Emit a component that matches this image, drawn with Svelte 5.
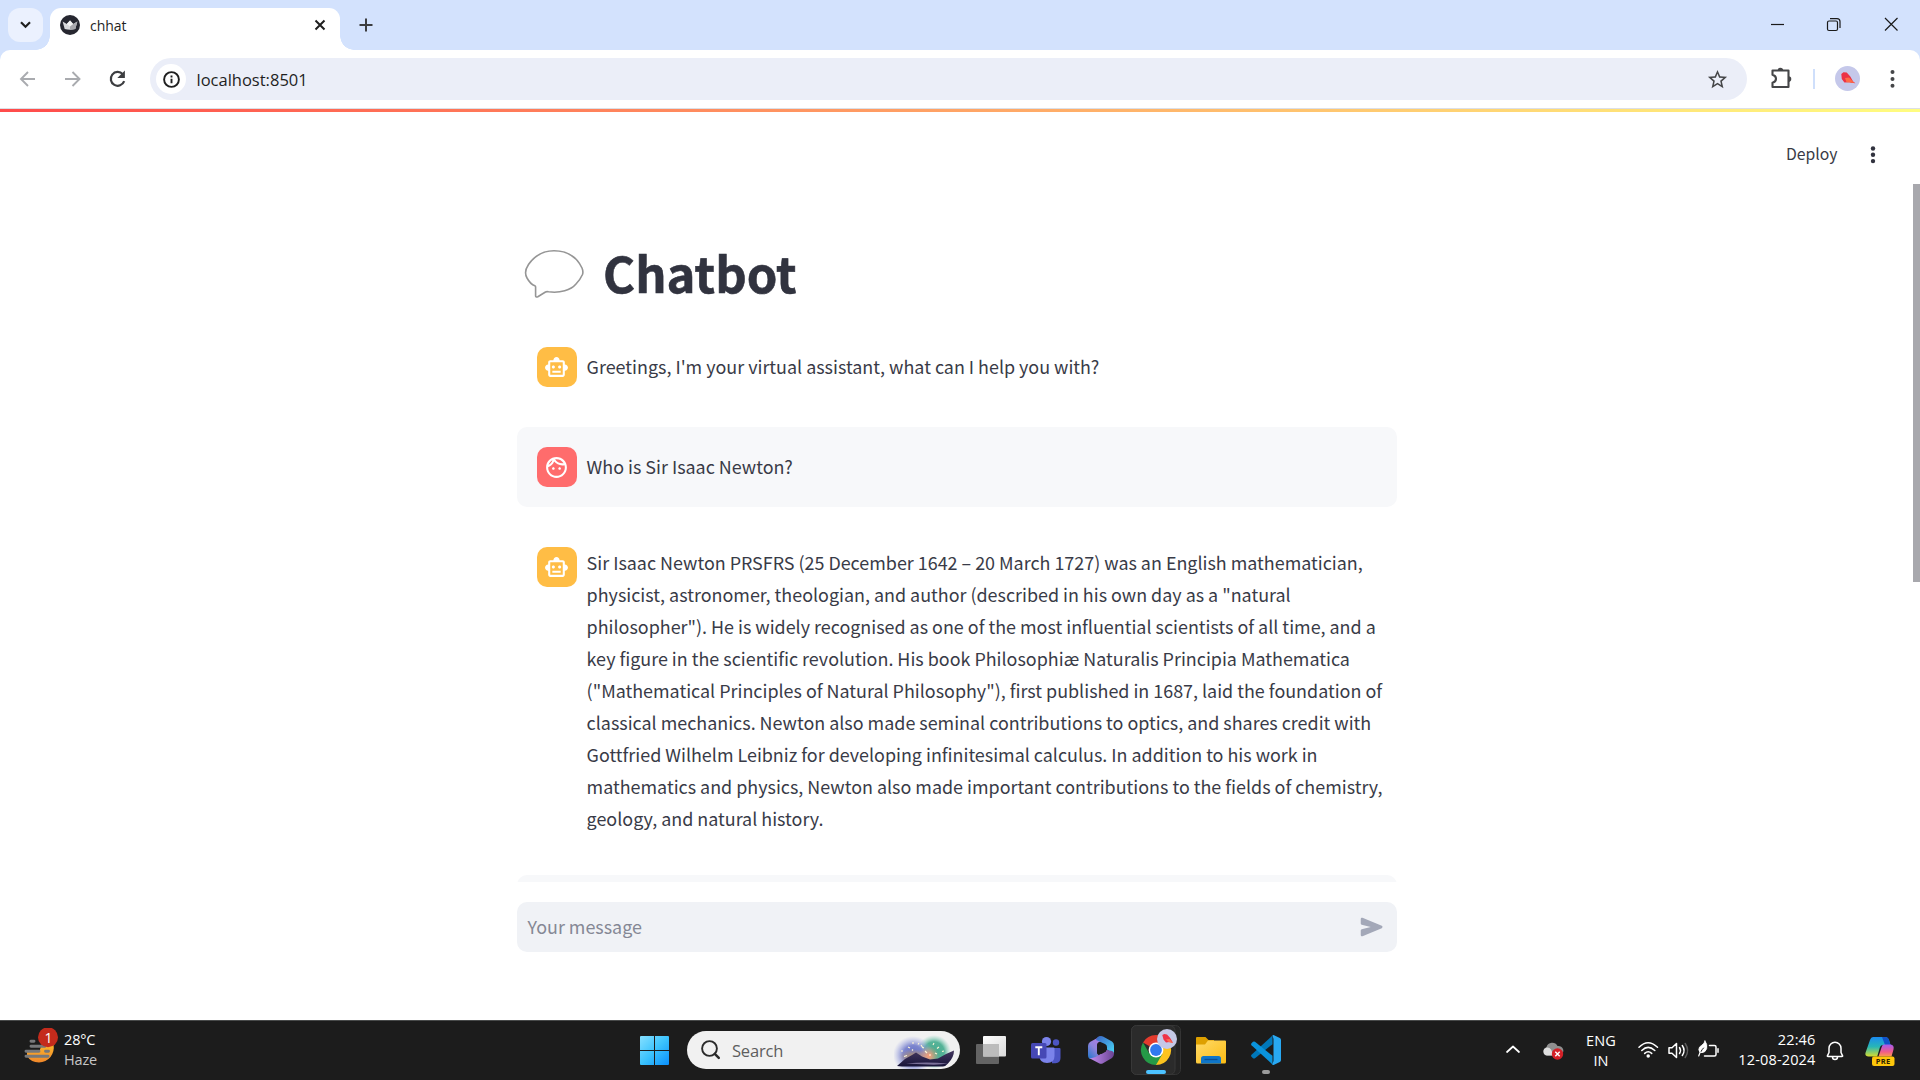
<script>
  const robot =
    'M20 9V7c0-1.1-.9-2-2-2h-3c0-1.66-1.34-3-3-3S9 3.34 9 5H6c-1.1 0-2 .9-2 2v2c-1.66 0-3 1.34-3 3s1.34 3 3 3v4c0 1.1.9 2 2 2h12c1.1 0 2-.9 2-2v-4c1.66 0 3-1.34 3-3s-1.34-3-3-3zm-2 10H6V7h12v12zm-9-6c-.83 0-1.5-.67-1.5-1.5S8.17 10 9 10s1.5.67 1.5 1.5S9.83 13 9 13zm7.5-1.5c0 .83-.67 1.5-1.5 1.5s-1.5-.67-1.5-1.5.67-1.5 1.5-1.5 1.5.67 1.5 1.5zM8 15h8v2H8v-2z';
  const face =
    'M10.25 13c0 .69-.56 1.25-1.25 1.25S7.75 13.69 7.75 13s.56-1.25 1.25-1.25 1.25.56 1.25 1.25zM15 11.75c-.69 0-1.25.56-1.25 1.25s.56 1.25 1.25 1.25 1.25-.56 1.25-1.25-.56-1.25-1.25-1.25zm7 .25c0 5.52-4.48 10-10 10S2 17.52 2 12 6.48 2 12 2s10 4.48 10 10zM10.66 4.12C12.06 6.44 14.6 8 17.5 8c.46 0 .91-.05 1.34-.12C17.44 5.56 14.9 4 12 4c-.46 0-.91.05-1.34.12zM4.42 9.47c1.71-.97 3.03-2.55 3.66-4.44C6.37 6 5.05 7.58 4.42 9.47zM20 12c0-.78-.12-1.53-.33-2.24-.7.15-1.42.24-2.17.24-3.13 0-5.92-1.44-7.76-3.69C8.69 8.87 6.6 10.88 4 11.86c.01.04 0 .09 0 .14 0 4.41 3.59 8 8 8s8-3.59 8-8z';

  const messages = [
    { role: 'assistant', lines: ["Greetings, I'm your virtual assistant, what can I help you with?"] },
    { role: 'user', lines: ['Who is Sir Isaac Newton?'] },
    {
      role: 'assistant',
      lines: [
        'Sir Isaac Newton PRSFRS (25 December 1642 – 20 March 1727) was an English mathematician,',
        'physicist, astronomer, theologian, and author (described in his own day as a "natural',
        'philosopher"). He is widely recognised as one of the most influential scientists of all time, and a',
        'key figure in the scientific revolution. His book Philosophiæ Naturalis Principia Mathematica',
        '("Mathematical Principles of Natural Philosophy"), first published in 1687, laid the foundation of',
        'classical mechanics. Newton also made seminal contributions to optics, and shares credit with',
        'Gottfried Wilhelm Leibniz for developing infinitesimal calculus. In addition to his work in',
        'mathematics and physics, Newton also made important contributions to the fields of chemistry,',
        'geology, and natural history.'
      ]
    }
  ];
</script>

<div class="screen">
  <header class="tabs">
    <button class="tab-search" aria-label="Search tabs">
      <svg width="35" height="34" fill="none" stroke="#1f1f1f" stroke-width="2.2"><path d="M13 14.2l4.5 4.5 4.5-4.5" /></svg>
    </button>
    <div class="tab">
      <svg class="favicon" width="20" height="20" viewBox="0 0 20 20">
        <circle cx="10" cy="10" r="10" fill="#262730" />
        <path d="M2.6 6.5l4.2 2.4L10 5.6l3.2 3.3 4.2-2.4-2.1 7.6q-5.3 1.1-10.6 0z" fill="#d9d9dc" />
        <path d="M10 5.6l3.2 3.3 4.2-2.4-2.1 7.6q-2.6.5-5.3.6z" fill="#a9a9ae" />
        <path d="M6.8 8.9L10 5.6l3.2 3.3L10 11.5z" fill="#f4f4f4" />
      </svg>
      <span class="tab-title">chhat</span>
      <svg class="tab-close" width="12" height="12" fill="none" stroke="#1f1f1f" stroke-width="2"><path d="M1.5 1.5l9 9M10.5 1.5l-9 9" /></svg>
    </div>
    <svg class="new-tab" width="14" height="14" stroke="#3c3d40" stroke-width="2"><path d="M7 .5v13M.5 7h13" /></svg>
    <svg class="window-controls" width="150" height="50" fill="none" stroke="#1a1a1a" stroke-width="1.2">
      <path d="M1 24.5h13" />
      <rect x="57.5" y="21" width="10" height="9.5" rx="1.5" />
      <path d="M60 18.6h7a3 3 0 0 1 3 3v6.5" />
      <path d="M115 18l12.5 12.5M127.5 18L115 30.5" />
    </svg>
  </header>

  <div class="toolbar">
    <svg class="nav-icons" width="126" height="58" fill="none" stroke-width="1.9">
      <g stroke="#a9abaf"><path d="M35 29H21.5M28 22l-7 7 7 7" /><path d="M65 29h14M72.5 22l7 7-7 7" /></g>
      <path d="M122.8 24.2a6.9 6.9 0 1 0 1.4 7" stroke="#3c3d40" stroke-width="2.2" />
      <path d="M124.9 20.5v7.6h-7.6z" fill="#3c3d40" />
    </svg>
    <div class="omnibox">
      <div class="site-info">
        <svg width="17" height="17" fill="none" stroke="#1f1f1f" stroke-width="1.9"><circle cx="8.5" cy="8.5" r="7.4" /><path d="M8.5 7.7v4.6M8.5 4.6v1.9" /></svg>
      </div>
      <span class="url">localhost:8501</span>
      <svg class="star" width="23" height="23" viewBox="0 0 24 24" fill="#454648"><path d="M22 9.24l-7.19-.62L12 2 9.19 8.63 2 9.24l5.46 4.73L5.82 21 12 17.27 18.18 21l-1.63-7.03L22 9.24zM12 15.4l-3.76 2.27 1-4.28-3.32-2.88 4.38-.38L12 6.1l1.71 4.04 4.38.38-3.32 2.88 1 4.28L12 15.4z" /></svg>
    </div>
    <svg class="actions" width="150" height="58">
      <path d="M2.5 20.5h16v16.5h-16v-4.2q3.5-1 3.5-4t-3.5-4z" fill="none" stroke="#454648" stroke-width="2.1" stroke-linejoin="round" />
      <path d="M7.6 20.5a2.8 2.8 0 0 1 5.6 0zM18.5 26.3a2.8 2.8 0 0 1 0 5.6z" fill="#454648" />
      <path d="M44 19v20" stroke="#cfdffb" stroke-width="2" />
      <circle cx="77.5" cy="28.5" r="12.5" fill="#c5c8ea" />
      <path d="M71.3 24l2.2-1.8 3.2.3 3.6 4 2.8 5 2.3 1.8-4-.5-2-.5-5 .2-2.6-3.5z" fill="#ec3146" />
      <path d="M75 28l4-.5 5.5 5.5-4-.5-4-.3z" fill="#ff6a45" />
      <g fill="#454648"><circle cx="122.5" cy="22" r="2" /><circle cx="122.5" cy="29" r="2" /><circle cx="122.5" cy="35.8" r="2" /></g>
    </svg>
  </div>

  <div class="decoration"></div>

  <div class="app">
    <div class="app-bar">
      <span class="deploy">Deploy</span>
      <svg width="6" height="18" fill="#31333f"><circle cx="3" cy="2.5" r="2.2" /><circle cx="3" cy="8.8" r="2.2" /><circle cx="3" cy="15.1" r="2.2" /></svg>
    </div>
    <div class="scroll-thumb"></div>
    <main>
      <h1>
        <svg width="60" height="50" viewBox="-1 -1.5 60 50" fill="none" stroke="#959595" stroke-width="1.6" stroke-linejoin="round">
          <path d="M29 .3C17 .3 9 6 3.5 14Q-1.500 21.500 2 27.500C4.500 32 7.500 34.500 9.800 35.300Q10.800 35.700 10.600 37V45.500Q11 47 12.800 46.200L20.500 41.500Q21.700 40.800 23.500 41.300C35 43 46 39.500 51 33.500Q55 29.500 57.500 24Q58.500 21 57 17.500C52 7 43 .3 29 .3z" />
        </svg>
        <span>Chatbot</span>
      </h1>
      {#each messages as message}
        <section class="message {message.role}" class:long={message.lines.length > 1}>
          <div class="avatar">
            <svg width="25" height="25" viewBox="0 0 24 24" fill="#fff"><path d={message.role === 'user' ? face : robot} /></svg>
          </div>
          <p>
            {#each message.lines as line}<span>{line}</span>{/each}
          </p>
        </section>
      {/each}
      <div class="next-message"></div>
      <div class="chat-input">
        <span>Your message</span>
        <svg width="30" height="30" viewBox="0 0 24 24" fill="#a3a8b8"><path d="M3 5.51v3.71c0 .46.31.86.76.97L11 12l-7.24 1.81c-.45.11-.76.51-.76.97v3.71c0 .72.73 1.2 1.39.92l15.42-6.49c.82-.34.82-1.5 0-1.84L4.39 4.58C3.73 4.31 3 4.79 3 5.51z" /></svg>
      </div>
    </main>
  </div>

  <footer class="taskbar">
    <div class="weather">
      <svg width="36" height="40">
        <defs><linearGradient id="sun" x2="0" y2="1"><stop offset="0" stop-color="#fbb52c" /><stop offset="1" stop-color="#f0872a" /></linearGradient></defs>
        <path d="M3 24h12l2.500-6.500q1-1 3-1h9A15 15 0 0 1 15 34.500Q7 34.500 3 28z" fill="url(#sun)" />
        <g stroke="#77787a" stroke-width="2.9" stroke-linecap="round"><path d="M7 13.200h3M7 18.200h14M2 23.300h13M21.500 23.300h3M2 28.300h22" /></g>
        <circle cx="24" cy="9.3" r="10" fill="#c42b1c" />
        <text x="24.6" y="14.6" text-anchor="middle" class="badge-text">1</text>
      </svg>
      <div class="weather-text"><span>28°C</span><span class="dim">Haze</span></div>
    </div>

    <div class="pinned">
      <svg class="start" width="29" height="29">
        <defs><linearGradient id="win" x2="1" y2="1"><stop offset="0" stop-color="#86e0ff" /><stop offset=".5" stop-color="#3cc3fd" /><stop offset="1" stop-color="#0a8ffb" /></linearGradient></defs>
        <path d="M1 0h13v14H0V1q0-1 1-1zM15 0h13q1 0 1 1v13H15zM0 15h14v14H1q-1 0-1-1zM15 15h14v13q0 1-1 1H15z" fill="url(#win)" />
      </svg>
      <div class="search">
        <svg class="lens" width="20" height="20" fill="none" stroke="#2b2b2b" stroke-width="1.9" stroke-linecap="round"><circle cx="8.5" cy="8.5" r="7.4" /><path d="M13.8 13.8l4 4" stroke-width="2.5" /></svg>
        <span>Search</span>
        <svg class="scene" width="64" height="38">
          <defs>
            <radialGradient id="blue"><stop offset="0" stop-color="#5f6bc4" /><stop offset=".5" stop-color="#7780cc" stop-opacity=".95" /><stop offset="1" stop-color="#a3aae6" stop-opacity="0" /></radialGradient>
            <radialGradient id="green"><stop offset="0" stop-color="#49a98e" /><stop offset=".6" stop-color="#55b398" /><stop offset="1" stop-color="#8fd3bf" stop-opacity="0" /></radialGradient>
            <radialGradient id="sand"><stop offset="0" stop-color="#c49a62" /><stop offset="1" stop-color="#c49a62" stop-opacity="0" /></radialGradient>
            <radialGradient id="glow"><stop offset="0" stop-color="#ff9a72" /><stop offset="1" stop-color="#f7a27e" stop-opacity="0" /></radialGradient>
            <linearGradient id="hill" x2="0" y2="1"><stop offset="0" stop-color="#44375f" /><stop offset="1" stop-color="#171439" /></linearGradient>
          </defs>
          <circle cx="40" cy="21" r="17" fill="url(#green)" />
          <ellipse cx="19" cy="24" rx="20" ry="19" fill="url(#blue)" />
          <ellipse cx="20" cy="26" rx="15" ry="8" fill="url(#sand)" />
          <circle cx="35" cy="25" r="10" fill="url(#glow)" />
          <path d="M3 35l8-7 7-4 4-2.500 6 4 8 3 8-1 8-4.500 8-3.500q0 7-6 13-2 2.500-5 3H8z" fill="url(#hill)" />
          <path d="M12 32.500q20-2 42 0-8 1.500-20 1T12 32.500z" fill="#7b7199" />
          <g stroke="#fff6d6" stroke-width="1.1"><path d="M10 25.500l3-1M7 20h2M14 16l2 1M19 11v2M25 12l-1 1.500M18 19.500l1-1M27 14l2 3M31 20l2 2M40 12l-1 2M45 16l-2 1.500M50 20l-2 .5M43 23l-2-1M36 25v-2M30 17l-2-1" /></g>
        </svg>
      </div>

      <svg class="app-icon" width="55" height="60">
        <defs><linearGradient id="tv" x2="1" y2="1"><stop offset="0" stop-color="#fff" /><stop offset="1" stop-color="#dadada" /></linearGradient></defs>
        <rect x="12" y="24" width="23" height="20" rx="1" fill="#636363" />
        <rect x="19" y="16" width="23" height="20.5" rx="1" fill="url(#tv)" />
        <rect x="19" y="24" width="16" height="12.5" fill="#bcbcbc" />
      </svg>

      <svg class="app-icon" width="55" height="60">
        <circle cx="37" cy="22.5" r="3.2" fill="#4c55c4" />
        <path d="M33 28h7.5q1 0 1 1v9q0 5-5 5.2H33z" fill="#4c55c4" />
        <circle cx="27.5" cy="21.5" r="4.6" fill="#7b83eb" />
        <path d="M21 27.500h13.500q1 0 1 1V36q0 7-7.500 7T20.500 36z" fill="#7b83eb" />
        <rect x="12" y="23" width="15.5" height="15.5" rx="1.5" fill="#4648b5" />
        <path d="M16.300 27.200h7M19.800 27.200v8" stroke="#fff" stroke-width="1.9" />
      </svg>

      <svg class="app-icon" width="55" height="60">
        <defs>
          <linearGradient id="ma" x1=".8" y1="0" x2=".2" y2="1"><stop offset="0" stop-color="#b17be4" /><stop offset=".5" stop-color="#8e83db" /><stop offset="1" stop-color="#2f79cf" /></linearGradient>
          <linearGradient id="mb" x2="1" y2="1"><stop offset="0" stop-color="#3b62c4" /><stop offset="1" stop-color="#48dcfa" /></linearGradient>
          <linearGradient id="mc" x2="1" y2="0"><stop offset="0" stop-color="#c791f5" /><stop offset="1" stop-color="#6b4393" /></linearGradient>
        </defs>
        <path d="M26 16.500L16 22q-2 1.500-2 4v9q0 4 3 4 3.500 0 8-3.500l-2-2V25q0-3 3.500-3.500z" fill="url(#ma)" />
        <path d="M22 20q1-4 5-4 1 0 2 .5l9 5q2 1.500 2 4V34l-7-4.500V27q0-2-2-3z" fill="url(#mb)" />
        <path d="M15 38q5 1 10-3l8-5 5 1q3 1 1.500 5l-1.500 2-9 5.300q-2 1-4 0z" fill="url(#mc)" />
        <path d="M23.500 25.500l4-2.500 4.500 2.500v6l-4.500 2.500-4-2.500z" fill="#1c1c1c" />
      </svg>

      <svg class="app-icon" width="55" height="60">
        <rect x="2.5" y="5.5" width="49" height="49" rx="5" fill="#242424" stroke="#343434" />
        <rect x="2.5" y="5.5" width="43.5" height="49" rx="5" fill="#2b2b2b" stroke="#383838" />
        <path d="M27 30L14 22.500A15 15 0 0 1 40 22.500z" fill="#e33b2e" />
        <path d="M27 30l7.500-7.500H40A15 15 0 0 1 27 45z" fill="#fcc31e" />
        <path d="M27 30l6.500 3.800L27 45A15 15 0 0 1 14 22.500l6.500 11.300z" fill="#259a47" />
        <circle cx="27" cy="30" r="7.4" fill="#fff" /><circle cx="27" cy="30" r="5.9" fill="#3079ee" />
        <circle cx="38" cy="19" r="10" fill="#c5c8e6" />
        <path d="M33.300 15l2-1 2.700.6 3 3.200 3 5-3.500-.8-3.500.4-2.500-2.800z" fill="#ee3348" />
        <path d="M37 19.500l3.500-.5 3.500 4-4-.8z" fill="#ff6d51" />
        <rect x="17" y="50" width="20" height="4" rx="2" fill="#4cc2ff" />
      </svg>

      <svg class="app-icon" width="55" height="60">
        <defs><linearGradient id="fo" x2="1" y2="1"><stop offset="0" stop-color="#ffda69" /><stop offset="1" stop-color="#fbbc13" /></linearGradient></defs>
        <path d="M12 18q0-1 1-1h8.500l3 3H30v5H12z" fill="#dea000" />
        <path d="M12 24.500h9l3-4h17q1 0 1 1V42q0 1.500-1.500 1.500h-27Q12 43.500 12 42z" fill="url(#fo)" />
        <path d="M17 43.500v-5q0-2.500 2.500-2.500h15q2.500 0 2.500 2.500v5z" fill="#0f76c9" />
        <path d="M20.500 39.500h13" stroke="#0a4f96" stroke-width="1.3" />
      </svg>

      <svg class="app-icon" width="55" height="60">
        <path d="M33.500 15.500v8.700L16 38.200q-1 .8-2 0l-1.500-1.500q-.9-1 0-2z" fill="#0077b9" />
        <path d="M33.500 44.500v-8.700L16 21.800q-1-.8-2 0l-1.500 1.500q-.9 1 0 2z" fill="#0a93dc" />
        <path d="M33.500 15.200q.8-.4 1.600 0l5.700 2.800q1.200.6 1.200 2v20q0 1.400-1.200 2l-5.700 2.800q-1.200.5-2-.3l1.400-3.500v-22z" fill="#28a8f2" />
        <rect x="23" y="50" width="8" height="4" rx="2" fill="#9a9a9a" />
      </svg>
    </div>

    <div class="tray">
      <svg class="chevron" width="16" height="10" fill="none" stroke="#fff" stroke-width="1.7" stroke-linecap="round" stroke-linejoin="round"><path d="M2 8l6-5.500L14 8" /></svg>
      <svg class="cloud" width="22" height="20">
        <path d="M5 14.500a4.500 4.500 0 0 1-.5-8.500A6 6 0 0 1 15.500 5a4.500 4.500 0 0 1 2 9.500z" fill="#8f8f8f" />
        <path d="M5 14.500a4 4 0 0 1-.8-7.800q3-.8 5 2l2.300 5.800z" fill="#dedede" />
        <circle cx="15.5" cy="13" r="5.7" fill="#d42027" /><path d="M13.300 10.800l4.400 4.400M17.700 10.800l-4.400 4.400" stroke="#fff" stroke-width="1.4" />
      </svg>
      <div class="lang"><span>ENG</span><span>IN</span></div>
      <svg class="status" width="82" height="22" fill="none" stroke="#fff" stroke-width="1.5" stroke-linecap="round" stroke-linejoin="round">
        <path d="M1 8.300q9-9 18.500 0M3.800 11.500q6.200-6.300 13 0M6.700 14.400q3.500-3.300 7 0" />
        <circle cx="10.2" cy="17" r="1" fill="#fff" />
        <path d="M31 8.800h3l4.500-4.300v14l-4.500-4.300h-3z" /><path d="M41.500 8.500q2 3 0 6M44.300 6.500q3.500 5 0 10" />
        <path d="M47.200 4.500q4.800 7 0 14" stroke="#5c5c5c" />
        <path d="M71.500 6.500h5q1.500 0 1.500 1.500v7.500q0 1.500-1.500 1.500H66.500M80 9.800v3.500" />
        <path d="M67 2q2.700 3.500 1.700 7.500-1.200 4-4.700 4.200-3 0-3.200-3.200 0-2.700 3-4.300Q66.500 4.700 67 2z" fill="#fff" stroke-width=".8" />
        <path d="M65.500 9q-1.500 1.500-2.500 3.500" stroke="#1c1c1c" stroke-width="1" /><path d="M62.200 13l-1.500 4" stroke-width="1.2" />
      </svg>
      <div class="clock"><span>22:46</span><span>12-08-2024</span></div>
      <svg class="bell" width="18" height="20" fill="none" stroke="#fff" stroke-width="1.5" stroke-linejoin="round"><path d="M9 1.200a6 6 0 0 1 6 6v4.300l1.600 3.300q.2.700-.6.700H2q-.8 0-.6-.7L3 11.500V7.200a6 6 0 0 1 6-6zM6.500 16q0 2.500 2.500 2.500t2.500-2.500" /></svg>
      <svg class="copilot" width="30" height="30">
        <defs>
          <linearGradient id="ca" x2="0" y2="1"><stop offset="0" stop-color="#1b8bf0" /><stop offset=".5" stop-color="#27b6b6" /><stop offset="1" stop-color="#d6dd2e" /></linearGradient>
          <linearGradient id="cb" x2="0" y2="1"><stop offset="0" stop-color="#a55bf0" /><stop offset=".6" stop-color="#ef5b8c" /><stop offset="1" stop-color="#fb9b4b" /></linearGradient>
        </defs>
        <path d="M8 0h12q3 0 4 3l1.500 5H18q-2.500 0-3.300 3l-2.500 8.500H3.500Q-.5 19.500.6 15.500L5 3q1-3 3-3z" fill="url(#ca)" />
        <path d="M17 0h3q3 0 4 3l1.500 5H20z" fill="#1252c8" />
        <path d="M19 7.500h6.500Q29.500 8 28.500 12.500L26.500 19.500H13.500l3-9q.7-3 2.500-3z" fill="url(#cb)" />
        <rect x="7" y="19.5" width="22.5" height="9.5" rx="2" fill="#fdc60b" />
        <text x="18.2" y="27.1" text-anchor="middle" class="pre">PRE</text>
      </svg>
    </div>
  </footer>
</div>

<style>
  :global(body) { margin: 0; overflow: hidden; }
  .screen { width: 1920px; height: 1080px; display: flex; flex-direction: column; overflow: hidden; background: #fff; font-family: 'Open Sans', 'Noto Sans', sans-serif; }
  .screen span { white-space: nowrap; }
  svg { display: block; flex: none; }

  .tabs { position: relative; height: 50px; flex: none; display: flex; align-items: flex-start; background: #d3e2fd; }
  .tab-search { width: 35px; height: 34px; margin: 8px 0 0 8px; padding: 0; border: 0; border-radius: 12px; background: #ebf1fe; }
  .tab { position: relative; box-sizing: border-box; width: 290px; height: 42px; margin: 8px 0 0 7px; padding: 0 14px 8px 10px; display: flex; align-items: center; background: #fff; border-radius: 11px 11px 0 0; }
  .tab::before, .tab::after { content: ''; position: absolute; bottom: 0; width: 14px; height: 14px; }
  .tab::before { left: -14px; background: radial-gradient(circle at 0 0, transparent 13.5px, #fff 14px); }
  .tab::after { right: -14px; background: radial-gradient(circle at 100% 0, transparent 13.5px, #fff 14px); }
  .tab-title { margin-left: 10px; font-size: 14px; letter-spacing: -.05px; color: #1f1f1f; }
  .tab-close { margin-left: auto; }
  .new-tab { margin: 18px 0 0 18.5px; }
  .window-controls { margin-left: auto; }

  .toolbar { height: 58px; flex: none; display: flex; align-items: center; background: #fff; border-radius: 10px 10px 0 0; box-shadow: 0 -10px 0 0 #d3e2fd; border-bottom: 1px solid #dcdfe6; }
  .omnibox { box-sizing: border-box; width: 1597px; height: 42px; margin-left: 24px; padding: 0 18px 0 6px; border-radius: 21px; background: #ebeef8; display: flex; align-items: center; }
  .site-info { width: 30px; height: 30px; border-radius: 50%; background: #fff; display: grid; place-items: center; }
  .url { margin-left: 10.5px; font-size: 16.5px; color: #1f1f1f; }
  .star { margin-left: auto; }
  .actions { margin-left: 23px; }

  .decoration { height: 3px; flex: none; background: linear-gradient(90deg, #ff4b4b, #fffd80); }

  .app { position: relative; height: 908px; flex: none; font-family: 'Noto Sans CJK JP', 'Noto Sans', sans-serif; color: #31333f; }
  .app-bar { height: 85px; box-sizing: border-box; padding: 0 44.5px 0 0; display: flex; justify-content: flex-end; align-items: center; gap: 32px; }
  .deploy { margin-top: -2px; font-size: 15.75px; color: #393b47; }
  .scroll-thumb { position: absolute; right: 0; top: 72px; width: 7px; height: 398px; background: #a8a8ad; }
  main { width: 880px; margin-left: 517px; display: flex; flex-direction: column; }
  h1 { margin: 0; height: 130px; box-sizing: border-box; padding: 52px 0 0 7px; display: flex; gap: 19px; }
  h1 span { margin-top: -2px; font-size: 49px; font-weight: 700; line-height: 50px; letter-spacing: 0; -webkit-text-stroke: .6px #31333f; }
  .message { box-sizing: border-box; height: 80px; margin-bottom: 20px; padding: 20px; display: flex; gap: 9.6px; border-radius: 10px; }
  .message.user { background: #f7f8fa; }
  .message.long { height: 328px; margin-bottom: 0; }
  .avatar { box-sizing: border-box; width: 40px; height: 40px; padding: 7.5px 0 0 7px; flex: none; border-radius: 10px; background: #ffbd45; }
  .user .avatar { background: #ff6c6c; }
  p { margin: 3px 0 0; font-size: 17.91px; line-height: 32px; color: #393b47; }
  p span { display: block; }
  .long p { margin-top: -1px; }
  .next-message { height: 7px; margin-top: 20px; overflow: hidden; }
  .next-message::before { content: ''; display: block; height: 80px; border-radius: 10px; background: #f7f8fa; }
  .chat-input { box-sizing: border-box; height: 50px; margin-top: 20px; padding: 0 10px 0 10.5px; display: flex; align-items: center; justify-content: space-between; border-radius: 10px; background: #f0f2f6; color: #858895; font-size: 17.91px; }
  .chat-input span { margin-top: -3px; }

  .taskbar { box-sizing: border-box; height: 60px; flex: none; display: flex; border-top: 1px solid #484a4a; background: #1c1c1c; color: #fff; }
  .weather { width: 640px; display: flex; }
  .weather svg { margin: 7px 0 0 24px; }
  .weather-text { margin: 9px 0 0 4px; }
  .weather-text, .lang, .clock { display: flex; flex-direction: column; font-size: 14.5px; line-height: 20px; letter-spacing: -.15px; }
  .dim { color: #c6c6c6; }
  .badge-text { font-size: 14px; fill: #fff; }
  .pinned { width: 654px; display: flex; }
  .start { margin: 15px 18px 0 0; }
  .search { box-sizing: border-box; width: 273px; height: 38px; margin: 10px 4px 0 0; padding: 0 2px 0 14px; display: flex; align-items: center; border-radius: 19px; background: #f1f1f1; overflow: hidden; }
  .search span { margin-left: 11px; font-size: 16.5px; color: #5e5e5e; letter-spacing: -.2px; }
  .scene { margin-left: auto; }
  .app-icon { margin-top: -1px; }
  .tray { flex: 1; display: flex; align-items: flex-start; }
  .chevron { margin: 23px 0 0 211px; }
  .cloud { margin: 20px 0 0 21px; }
  .lang { width: 40px; margin: 10px 0 0 17px; align-items: center; letter-spacing: .1px; }
  .status { margin: 18px 0 0 17px; }
  .clock { width: 80px; margin: 9px 0 0 15.5px; align-items: flex-end; letter-spacing: .15px; }
  .bell { margin: 20px 0 0 10.5px; }
  .copilot { margin: 16px 0 0 21px; }
  .pre { font-size: 7.5px; font-weight: 700; letter-spacing: .4px; fill: #2a2000; }
</style>
